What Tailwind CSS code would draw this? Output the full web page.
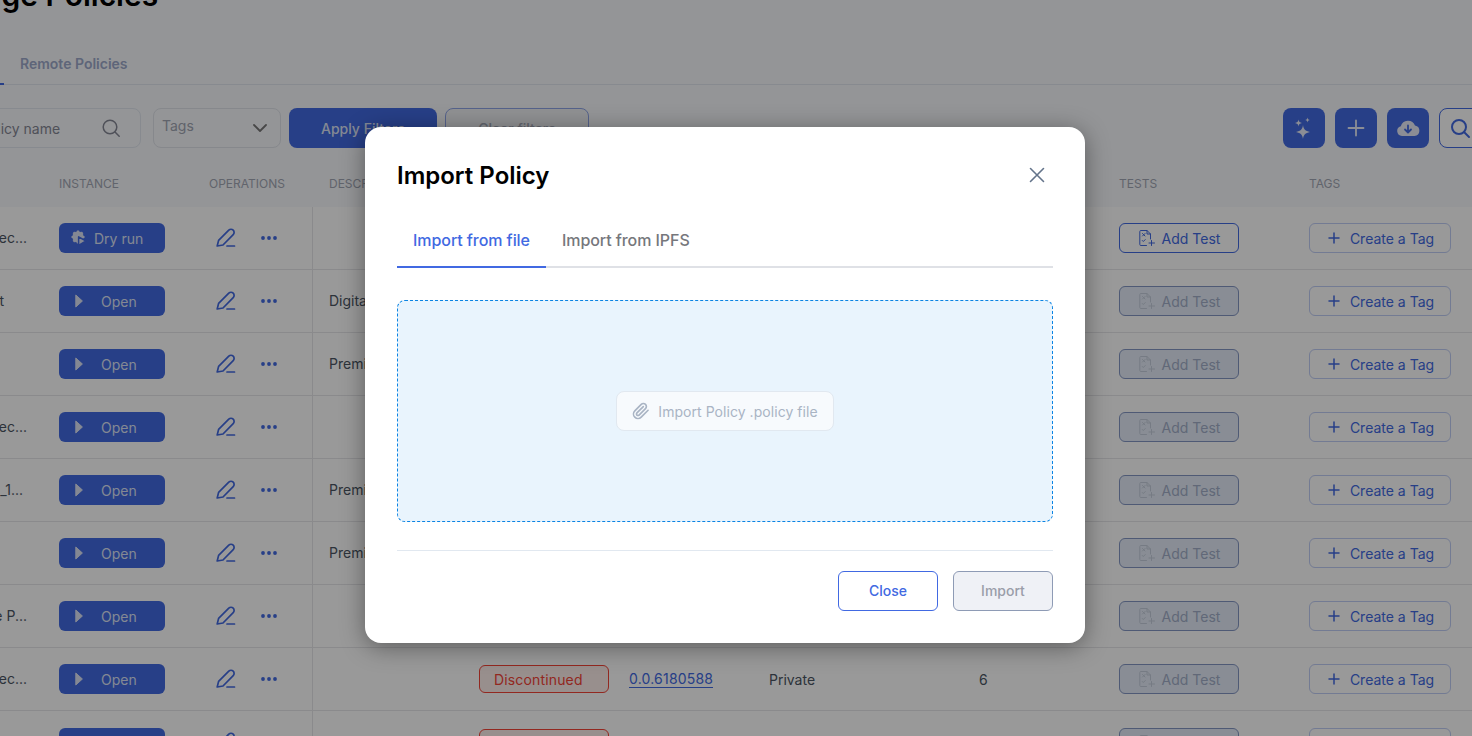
<!DOCTYPE html>
<html lang="en">
<head>
<meta charset="utf-8">
<title>Manage Policies</title>
<script src="https://cdn.jsdelivr.net/npm/@tailwindcss/browser@4"></script>
</head>
<body class="m-0 bg-white font-['Inter',sans-serif]">
<svg class="hidden" xmlns="http://www.w3.org/2000/svg">
  <symbol id="pen" viewBox="0 0 20 20"><path d="M1.200 18 2.600 12.400 12.800 2.200c1.200-1.200 3.200-1.200 4.400 0s1.200 3.200 0 4.400L7 17 1.200 18ZM11 18h7.500" fill="none" stroke="currentColor" stroke-width="1.700" stroke-linecap="round" stroke-linejoin="round"/></symbol>
  <symbol id="dots" viewBox="0 0 16 4"><circle cx="2" cy="2" r="1.900" fill="currentColor"/><circle cx="8" cy="2" r="1.900" fill="currentColor"/><circle cx="14" cy="2" r="1.900" fill="currentColor"/></symbol>
  <symbol id="play" viewBox="0 0 8 14"><path d="M0.800 1 7.400 7 0.800 13Z" fill="currentColor" stroke="currentColor" stroke-linejoin="round"/></symbol>
  <symbol id="test" viewBox="0 0 16 16"><path d="M7.500 15.500H1.800a1 1 0 0 1-1-1V1.500a1 1 0 0 1 1-1H8l3.500 3.500V9M8 .5V4h3.500M3.500 3.500l2.500 2.500M6 3.500 3.500 6M3.300 10.500l1 1 1.900-1.900M12.500 10.500v5M10 13h5.500" fill="none" stroke="currentColor" stroke-width="1" stroke-linecap="round" stroke-linejoin="round"/></symbol>
  <symbol id="plus" viewBox="0 0 12 12"><path d="M6 1v10M1 6h10" fill="none" stroke="currentColor" stroke-width="1.500" stroke-linecap="round"/></symbol>
  <symbol id="gear" viewBox="0 0 16 16"><circle cx="7" cy="7" r="4.200" fill="none" stroke="currentColor" stroke-width="3"/><path d="M7 .5v13M.5 7h13M2.400 2.400l9.200 9.200M11.600 2.400l-9.200 9.200" fill="none" stroke="currentColor" stroke-width="2.200"/><path d="M7.600 6.800 15 11l-7.400 4.300Z" fill="currentColor" stroke="#4169e2" stroke-width="1.500" stroke-linejoin="round"/></symbol>
</svg>
<div class="relative h-[736px] w-[1472px] overflow-hidden bg-[#f7f8fc]">
  <div class="mt-[-22px] ml-[-79px] h-[34px] whitespace-nowrap text-[30px] font-semibold leading-[34px] text-black">Manage Policies</div>
  <div class="mt-[31px] flex h-[42px] items-stretch border-b border-[#e1e7ef]">
    <div class="mb-[-1px] w-[4px] border-b-2 border-[#4169e2]"></div>
    <div class="flex items-center pl-[16px] text-sm font-semibold text-[#9da8ca]">Remote Policies</div>
  </div>
  <div class="mt-[23px] flex h-[40px] items-stretch">
    <div class="ml-[-37px] flex w-[178px] items-center justify-between rounded-lg border border-[#e1e7ef] pr-[19px] pl-[16px] text-sm text-[#848794]">
      <span class="mt-[2px] whitespace-nowrap">Policy name</span>
      <svg class="h-[20px] w-[20px] text-[#848794]" viewBox="0 0 20 20" fill="none" stroke="currentColor" stroke-width="1.500" stroke-linecap="round"><circle cx="9" cy="9" r="6.800"/><path d="m14 14 4.200 4.200"/></svg>
    </div>
    <div class="ml-[12px] flex w-[128px] items-center justify-between rounded-lg border border-[#dfe3e9] pr-[12px] pl-[8px] text-sm text-[#a0a5b2]">
      <span class="mt-[-4px]">Tags</span>
      <svg class="h-[12px] w-[16px] text-[#777]" viewBox="0 0 16 12" fill="none" stroke="currentColor" stroke-width="1.800" stroke-linecap="round" stroke-linejoin="round"><path d="m2 3 6 6 6-6"/></svg>
    </div>
    <div class="ml-[8px] flex w-[148px] items-center justify-center rounded-lg bg-[#4169e2] text-sm font-medium text-[#dde3f5]"><span class="mt-[2px]">Apply Filters</span></div>
    <div class="ml-[8px] flex w-[144px] items-center justify-center rounded-lg border border-[#8ea4e8] bg-[#f0f2f6] text-sm font-medium text-[#a5abb8]"><span class="mt-[2px]">Clear filters</span></div>
    <div class="mr-[-9px] ml-auto flex gap-[10px]">
      <div class="flex w-[42px] items-center justify-center rounded-lg bg-[#4169e2] text-[#e8ecf8]">
        <svg class="h-[24px] w-[24px]" viewBox="0 0 24 24" fill="currentColor"><path d="M11 9c.6 4.300 2.200 6 7 7-4.800 1-6.400 2.700-7 7-.6-4.300-2.200-6-7-7 4.800-1 6.400-2.700 7-7ZM6.500 3.500c.4 2.400 1.200 3.100 3.500 3.500-2.300.4-3.100 1.100-3.500 3.500-.4-2.400-1.200-3.100-3.500-3.500 2.300-.4 3.100-1.100 3.500-3.500ZM15.500 1.500c.3 1.700.8 2.200 2.500 2.500-1.700.3-2.200.8-2.500 2.500-.3-1.700-.8-2.200-2.500-2.500 1.700-.3 2.200-.8 2.500-2.500Z"/></svg>
      </div>
      <div class="flex w-[42px] items-center justify-center rounded-lg bg-[#4169e2] text-[#e8ecf8]">
        <svg class="h-[18px] w-[18px]" viewBox="0 0 18 18" fill="none" stroke="currentColor" stroke-width="1.800" stroke-linecap="round"><path d="M9 1.500v15M1.500 9h15"/></svg>
      </div>
      <div class="flex w-[42px] items-center justify-center rounded-lg bg-[#4169e2] text-[#e8ecf8]">
        <svg class="h-[18px] w-[24px]" viewBox="0 0 24 18"><path d="M6 17A5 5 0 0 1 4.800 7.200 7.500 7.500 0 0 1 19 6.500 5.300 5.300 0 0 1 18.500 17Z" fill="currentColor"/><path d="M12 6.500v6.500M9 10.500l3 3 3-3" fill="none" stroke="#4169e2" stroke-width="1.800" stroke-linecap="round" stroke-linejoin="round"/></svg>
      </div>
      <div class="flex w-[42px] items-center justify-center rounded-lg border border-[#4169e2] bg-white text-[#4169e2]">
        <svg class="h-[22px] w-[22px]" viewBox="0 0 22 22" fill="none" stroke="currentColor" stroke-width="2" stroke-linecap="round"><circle cx="10" cy="10" r="7"/><path d="m15 15 5 5"/></svg>
      </div>
    </div>
  </div>

  <div class="mt-[15px] grid h-[44px] grid-cols-[43px_150px_119px_151px_150px_140px_210px_140px_190px_190px] items-center pb-[2px] text-xs text-[#a2a7b4]">
    <div></div><div class="pl-[16px]">INSTANCE</div><div class="pl-[16px]">OPERATIONS</div><div class="pl-[17px]">DESCRIPTION</div><div class="pl-[16px]">STATUS</div><div class="pl-[16px]">TOPIC</div><div class="pl-[16px]">TYPE</div><div class="pl-[16px]">ROLES</div><div class="pl-[16px]">TESTS</div><div class="pl-[16px]">TAGS</div>
  </div>

  <div class="bg-white text-sm text-[#4b5563]">
    <!-- row 1 -->
    <div class="grid h-[63px] grid-cols-[43px_150px_119px_151px_150px_140px_210px_140px_190px_190px] items-center border-b border-[#e6e7e9]">
      <div class="flex justify-end overflow-hidden pr-[16px] whitespace-nowrap">ec...</div>
      <div class="pl-[16px]"><div class="flex h-[30px] w-[106px] items-center rounded-md bg-[#4169e2] pl-[12px] text-[#dde3f5]"><svg class="h-[16px] w-[16px]"><use href="#gear"/></svg><span class="mt-[2px] ml-[7px]">Dry run</span></div></div>
      <div class="flex items-center pl-[23px] text-[#4169e2]"><svg class="mt-[-1px] h-[20px] w-[20px]"><use href="#pen"/></svg><svg class="ml-[25px] h-[4px] w-[16px]"><use href="#dots"/></svg></div>
      <div class="flex h-full items-center border-l border-[#e6e7e9] pl-[16px]"></div>
      <div></div><div></div><div></div><div></div>
      <div class="pl-[16px]"><div class="flex h-[30px] w-[120px] items-center justify-center gap-[7px] rounded-md border border-[#4169e2] bg-white pl-[1px] text-[#4169e2]"><svg class="h-[16px] w-[16px]"><use href="#test"/></svg><span class="mt-[2px]">Add Test</span></div></div>
      <div class="pl-[16px]"><div class="flex h-[30px] w-[142px] items-center justify-center gap-[10px] rounded-md border border-[#c0cdf5] bg-white pl-[2px] text-[#4169e2]"><svg class="h-[12px] w-[12px]"><use href="#plus"/></svg><span class="mt-[2px]">Create a Tag</span></div></div>
    </div>
    <!-- row 2 -->
    <div class="grid h-[63px] grid-cols-[43px_150px_119px_151px_150px_140px_210px_140px_190px_190px] items-center border-b border-[#e6e7e9]">
      <div class="flex justify-end overflow-hidden pr-[39px] whitespace-nowrap">t</div>
      <div class="pl-[16px]"><div class="flex h-[30px] w-[106px] items-center rounded-md bg-[#4169e2] pl-[16px] text-[#dde3f5]"><svg class="h-[14px] w-[8px]"><use href="#play"/></svg><span class="mt-[2px] ml-[18px]">Open</span></div></div>
      <div class="flex items-center pl-[23px] text-[#4169e2]"><svg class="mt-[-1px] h-[20px] w-[20px]"><use href="#pen"/></svg><svg class="ml-[25px] h-[4px] w-[16px]"><use href="#dots"/></svg></div>
      <div class="flex h-full items-center border-l border-[#e6e7e9] pl-[16px]">Digital</div>
      <div></div><div></div><div></div><div></div>
      <div class="pl-[16px]"><div class="flex h-[30px] w-[120px] items-center justify-center gap-[7px] rounded-md border border-[#8496c4] bg-[#e4ecf8] pl-[1px] text-[#a2aec8]"><svg class="h-[16px] w-[16px] text-[#c5cedc]"><use href="#test"/></svg><span class="mt-[2px]">Add Test</span></div></div>
      <div class="pl-[16px]"><div class="flex h-[30px] w-[142px] items-center justify-center gap-[10px] rounded-md border border-[#c0cdf5] bg-white pl-[2px] text-[#4169e2]"><svg class="h-[12px] w-[12px]"><use href="#plus"/></svg><span class="mt-[2px]">Create a Tag</span></div></div>
    </div>
    <!-- row 3 -->
    <div class="grid h-[63px] grid-cols-[43px_150px_119px_151px_150px_140px_210px_140px_190px_190px] items-center border-b border-[#e6e7e9]">
      <div></div>
      <div class="pl-[16px]"><div class="flex h-[30px] w-[106px] items-center rounded-md bg-[#4169e2] pl-[16px] text-[#dde3f5]"><svg class="h-[14px] w-[8px]"><use href="#play"/></svg><span class="mt-[2px] ml-[18px]">Open</span></div></div>
      <div class="flex items-center pl-[23px] text-[#4169e2]"><svg class="mt-[-1px] h-[20px] w-[20px]"><use href="#pen"/></svg><svg class="ml-[25px] h-[4px] w-[16px]"><use href="#dots"/></svg></div>
      <div class="flex h-full items-center border-l border-[#e6e7e9] pl-[16px]">Premium</div>
      <div></div><div></div><div></div><div></div>
      <div class="pl-[16px]"><div class="flex h-[30px] w-[120px] items-center justify-center gap-[7px] rounded-md border border-[#8496c4] bg-[#e4ecf8] pl-[1px] text-[#a2aec8]"><svg class="h-[16px] w-[16px] text-[#c5cedc]"><use href="#test"/></svg><span class="mt-[2px]">Add Test</span></div></div>
      <div class="pl-[16px]"><div class="flex h-[30px] w-[142px] items-center justify-center gap-[10px] rounded-md border border-[#c0cdf5] bg-white pl-[2px] text-[#4169e2]"><svg class="h-[12px] w-[12px]"><use href="#plus"/></svg><span class="mt-[2px]">Create a Tag</span></div></div>
    </div>
    <!-- row 4 -->
    <div class="grid h-[63px] grid-cols-[43px_150px_119px_151px_150px_140px_210px_140px_190px_190px] items-center border-b border-[#e6e7e9]">
      <div class="flex justify-end overflow-hidden pr-[16px] whitespace-nowrap">ec...</div>
      <div class="pl-[16px]"><div class="flex h-[30px] w-[106px] items-center rounded-md bg-[#4169e2] pl-[16px] text-[#dde3f5]"><svg class="h-[14px] w-[8px]"><use href="#play"/></svg><span class="mt-[2px] ml-[18px]">Open</span></div></div>
      <div class="flex items-center pl-[23px] text-[#4169e2]"><svg class="mt-[-1px] h-[20px] w-[20px]"><use href="#pen"/></svg><svg class="ml-[25px] h-[4px] w-[16px]"><use href="#dots"/></svg></div>
      <div class="flex h-full items-center border-l border-[#e6e7e9] pl-[16px]"></div>
      <div></div><div></div><div></div><div></div>
      <div class="pl-[16px]"><div class="flex h-[30px] w-[120px] items-center justify-center gap-[7px] rounded-md border border-[#8496c4] bg-[#e4ecf8] pl-[1px] text-[#a2aec8]"><svg class="h-[16px] w-[16px] text-[#c5cedc]"><use href="#test"/></svg><span class="mt-[2px]">Add Test</span></div></div>
      <div class="pl-[16px]"><div class="flex h-[30px] w-[142px] items-center justify-center gap-[10px] rounded-md border border-[#c0cdf5] bg-white pl-[2px] text-[#4169e2]"><svg class="h-[12px] w-[12px]"><use href="#plus"/></svg><span class="mt-[2px]">Create a Tag</span></div></div>
    </div>
    <!-- row 5 -->
    <div class="grid h-[63px] grid-cols-[43px_150px_119px_151px_150px_140px_210px_140px_190px_190px] items-center border-b border-[#e6e7e9]">
      <div class="flex justify-end overflow-hidden pr-[20px] whitespace-nowrap">_1...</div>
      <div class="pl-[16px]"><div class="flex h-[30px] w-[106px] items-center rounded-md bg-[#4169e2] pl-[16px] text-[#dde3f5]"><svg class="h-[14px] w-[8px]"><use href="#play"/></svg><span class="mt-[2px] ml-[18px]">Open</span></div></div>
      <div class="flex items-center pl-[23px] text-[#4169e2]"><svg class="mt-[-1px] h-[20px] w-[20px]"><use href="#pen"/></svg><svg class="ml-[25px] h-[4px] w-[16px]"><use href="#dots"/></svg></div>
      <div class="flex h-full items-center border-l border-[#e6e7e9] pl-[16px]">Premium</div>
      <div></div><div></div><div></div><div></div>
      <div class="pl-[16px]"><div class="flex h-[30px] w-[120px] items-center justify-center gap-[7px] rounded-md border border-[#8496c4] bg-[#e4ecf8] pl-[1px] text-[#a2aec8]"><svg class="h-[16px] w-[16px] text-[#c5cedc]"><use href="#test"/></svg><span class="mt-[2px]">Add Test</span></div></div>
      <div class="pl-[16px]"><div class="flex h-[30px] w-[142px] items-center justify-center gap-[10px] rounded-md border border-[#c0cdf5] bg-white pl-[2px] text-[#4169e2]"><svg class="h-[12px] w-[12px]"><use href="#plus"/></svg><span class="mt-[2px]">Create a Tag</span></div></div>
    </div>
    <!-- row 6 -->
    <div class="grid h-[63px] grid-cols-[43px_150px_119px_151px_150px_140px_210px_140px_190px_190px] items-center border-b border-[#e6e7e9]">
      <div></div>
      <div class="pl-[16px]"><div class="flex h-[30px] w-[106px] items-center rounded-md bg-[#4169e2] pl-[16px] text-[#dde3f5]"><svg class="h-[14px] w-[8px]"><use href="#play"/></svg><span class="mt-[2px] ml-[18px]">Open</span></div></div>
      <div class="flex items-center pl-[23px] text-[#4169e2]"><svg class="mt-[-1px] h-[20px] w-[20px]"><use href="#pen"/></svg><svg class="ml-[25px] h-[4px] w-[16px]"><use href="#dots"/></svg></div>
      <div class="flex h-full items-center border-l border-[#e6e7e9] pl-[16px]">Premium</div>
      <div></div><div></div><div></div><div></div>
      <div class="pl-[16px]"><div class="flex h-[30px] w-[120px] items-center justify-center gap-[7px] rounded-md border border-[#8496c4] bg-[#e4ecf8] pl-[1px] text-[#a2aec8]"><svg class="h-[16px] w-[16px] text-[#c5cedc]"><use href="#test"/></svg><span class="mt-[2px]">Add Test</span></div></div>
      <div class="pl-[16px]"><div class="flex h-[30px] w-[142px] items-center justify-center gap-[10px] rounded-md border border-[#c0cdf5] bg-white pl-[2px] text-[#4169e2]"><svg class="h-[12px] w-[12px]"><use href="#plus"/></svg><span class="mt-[2px]">Create a Tag</span></div></div>
    </div>
    <!-- row 7 -->
    <div class="grid h-[63px] grid-cols-[43px_150px_119px_151px_150px_140px_210px_140px_190px_190px] items-center border-b border-[#e6e7e9]">
      <div class="flex justify-end overflow-hidden pr-[16px] whitespace-nowrap">e P...</div>
      <div class="pl-[16px]"><div class="flex h-[30px] w-[106px] items-center rounded-md bg-[#4169e2] pl-[16px] text-[#dde3f5]"><svg class="h-[14px] w-[8px]"><use href="#play"/></svg><span class="mt-[2px] ml-[18px]">Open</span></div></div>
      <div class="flex items-center pl-[23px] text-[#4169e2]"><svg class="mt-[-1px] h-[20px] w-[20px]"><use href="#pen"/></svg><svg class="ml-[25px] h-[4px] w-[16px]"><use href="#dots"/></svg></div>
      <div class="flex h-full items-center border-l border-[#e6e7e9] pl-[16px]"></div>
      <div></div><div></div><div></div><div></div>
      <div class="pl-[16px]"><div class="flex h-[30px] w-[120px] items-center justify-center gap-[7px] rounded-md border border-[#8496c4] bg-[#e4ecf8] pl-[1px] text-[#a2aec8]"><svg class="h-[16px] w-[16px] text-[#c5cedc]"><use href="#test"/></svg><span class="mt-[2px]">Add Test</span></div></div>
      <div class="pl-[16px]"><div class="flex h-[30px] w-[142px] items-center justify-center gap-[10px] rounded-md border border-[#c0cdf5] bg-white pl-[2px] text-[#4169e2]"><svg class="h-[12px] w-[12px]"><use href="#plus"/></svg><span class="mt-[2px]">Create a Tag</span></div></div>
    </div>
    <!-- row 8 -->
    <div class="grid h-[63px] grid-cols-[43px_150px_119px_151px_150px_140px_210px_140px_190px_190px] items-center border-b border-[#e6e7e9]">
      <div class="flex justify-end overflow-hidden pr-[16px] whitespace-nowrap">ec...</div>
      <div class="pl-[16px]"><div class="flex h-[30px] w-[106px] items-center rounded-md bg-[#4169e2] pl-[16px] text-[#dde3f5]"><svg class="h-[14px] w-[8px]"><use href="#play"/></svg><span class="mt-[2px] ml-[18px]">Open</span></div></div>
      <div class="flex items-center pl-[23px] text-[#4169e2]"><svg class="mt-[-1px] h-[20px] w-[20px]"><use href="#pen"/></svg><svg class="ml-[25px] h-[4px] w-[16px]"><use href="#dots"/></svg></div>
      <div class="flex h-full items-center border-l border-[#e6e7e9] pl-[16px]"></div>
      <div class="pl-[16px]"><div class="flex h-[28px] w-[130px] items-center rounded-md border border-[#f44336] bg-[#fdeeec] pl-[14px] tracking-[0.15px] text-[#f44336]"><span class="mt-[2px]">Discontinued</span></div></div>
      <div class="pl-[16px]"><span class="border-b border-[#4169e2] tracking-[0.2px] text-[#4169e2]">0.0.6180588</span></div>
      <div class="pl-[16px]"><div class="mt-[2px]">Private</div></div>
      <div class="pl-[16px]"><div class="mt-[2px]">6</div></div>
      <div class="pl-[16px]"><div class="flex h-[30px] w-[120px] items-center justify-center gap-[7px] rounded-md border border-[#8496c4] bg-[#e4ecf8] pl-[1px] text-[#a2aec8]"><svg class="h-[16px] w-[16px] text-[#c5cedc]"><use href="#test"/></svg><span class="mt-[2px]">Add Test</span></div></div>
      <div class="pl-[16px]"><div class="flex h-[30px] w-[142px] items-center justify-center gap-[10px] rounded-md border border-[#c0cdf5] bg-white pl-[2px] text-[#4169e2]"><svg class="h-[12px] w-[12px]"><use href="#plus"/></svg><span class="mt-[2px]">Create a Tag</span></div></div>
    </div>
    <!-- row 9 -->
    <div class="grid h-[63px] grid-cols-[43px_150px_119px_151px_150px_140px_210px_140px_190px_190px] items-center">
      <div></div>
      <div class="pl-[16px]"><div class="flex h-[30px] w-[106px] items-center rounded-md bg-[#4169e2] pl-[16px] text-[#dde3f5]"><svg class="h-[14px] w-[8px]"><use href="#play"/></svg><span class="mt-[2px] ml-[18px]">Open</span></div></div>
      <div class="flex items-center pl-[23px] text-[#4169e2]"><svg class="mt-[-1px] h-[20px] w-[20px]"><use href="#pen"/></svg><svg class="ml-[25px] h-[4px] w-[16px]"><use href="#dots"/></svg></div>
      <div class="flex h-full items-center border-l border-[#e6e7e9] pl-[16px]"></div>
      <div class="pl-[16px]"><div class="flex h-[28px] w-[130px] items-center rounded-md border border-[#f44336] bg-[#fdeeec] pl-[14px] tracking-[0.15px] text-[#f44336]"><span class="mt-[2px]">Discontinued</span></div></div>
      <div></div><div></div><div></div>
      <div class="pl-[16px]"><div class="flex h-[30px] w-[120px] items-center justify-center gap-[7px] rounded-md border border-[#8496c4] bg-[#e4ecf8] pl-[1px] text-[#a2aec8]"><svg class="h-[16px] w-[16px] text-[#c5cedc]"><use href="#test"/></svg><span class="mt-[2px]">Add Test</span></div></div>
      <div class="pl-[16px]"><div class="flex h-[30px] w-[142px] items-center justify-center gap-[10px] rounded-md border border-[#c0cdf5] bg-white pl-[2px] text-[#4169e2]"><svg class="h-[12px] w-[12px]"><use href="#plus"/></svg><span class="mt-[2px]">Create a Tag</span></div></div>
    </div>
  </div>

  <!-- overlay -->
  <div class="absolute inset-0 bg-black/40"></div>

  <!-- dialog -->
  <div class="absolute top-[127px] left-[365px] flex h-[516px] w-[720px] flex-col rounded-2xl bg-white px-[32px] shadow-[0_4px_24px_rgba(0,0,0,0.4)]">
    <div class="mt-[33px] flex h-[32px] items-center justify-between">
      <div class="text-2xl font-semibold text-black">Import Policy</div>
      <svg class="mt-[-2px] mr-[8px] h-[16px] w-[16px] text-[#64748b]" viewBox="0 0 16 16" fill="none" stroke="currentColor" stroke-width="1.600" stroke-linecap="round"><path d="m1.500 1.500 13 13M14.500 1.500l-13 13"/></svg>
    </div>
    <div class="mt-[24px] flex h-[52px] border-b-2 border-[#dfe1e6] text-base font-medium tracking-[-0.07px]">
      <div class="mb-[-2px] flex w-[149px] items-center justify-center border-b-2 border-[#4169e2] pb-[3px] text-[#4169e2]">Import from file</div>
      <div class="mb-[-2px] flex items-center px-[16px] pb-[5px] text-[#76777c]">Import from IPFS</div>
    </div>
    <div class="mt-[32px] flex h-[222px] items-center justify-center rounded-lg border border-dashed border-[#0b84e3] bg-[#e9f4fd]">
      <div class="flex h-[40px] w-[218px] items-center justify-center gap-[7px] rounded-lg border border-[#e1e8f0] bg-[#f7fafd] text-sm tracking-[0.05px] text-[#a9b4c4]">
        <svg class="mr-[1px] h-[18px] w-[18px]" viewBox="0 0 24 24" fill="none" stroke="currentColor" stroke-width="2.200" stroke-linecap="round" stroke-linejoin="round"><path d="m21.440 11.050-9.190 9.190a6 6 0 0 1-8.490-8.490l8.570-8.570A4 4 0 1 1 18 8.840l-8.590 8.570a2 2 0 0 1-2.830-2.830l8.490-8.480"/></svg>
        <span class="mt-[2px]">Import Policy .policy file</span>
      </div>
    </div>
    <div class="mt-[28px] flex justify-end gap-[15px] border-t border-[#e1e8f0] pt-[20px]">
      <div class="flex h-[40px] w-[100px] items-center justify-center rounded-md border border-[#4169e2] bg-white text-sm font-medium text-[#4169e2]">Close</div>
      <div class="flex h-[40px] w-[100px] items-center justify-center rounded-md border border-[#8e9bb5] bg-[#eff1f6] text-sm font-medium text-[#9a9ea9]">Import</div>
    </div>
  </div>
</div>
</body>
</html>
